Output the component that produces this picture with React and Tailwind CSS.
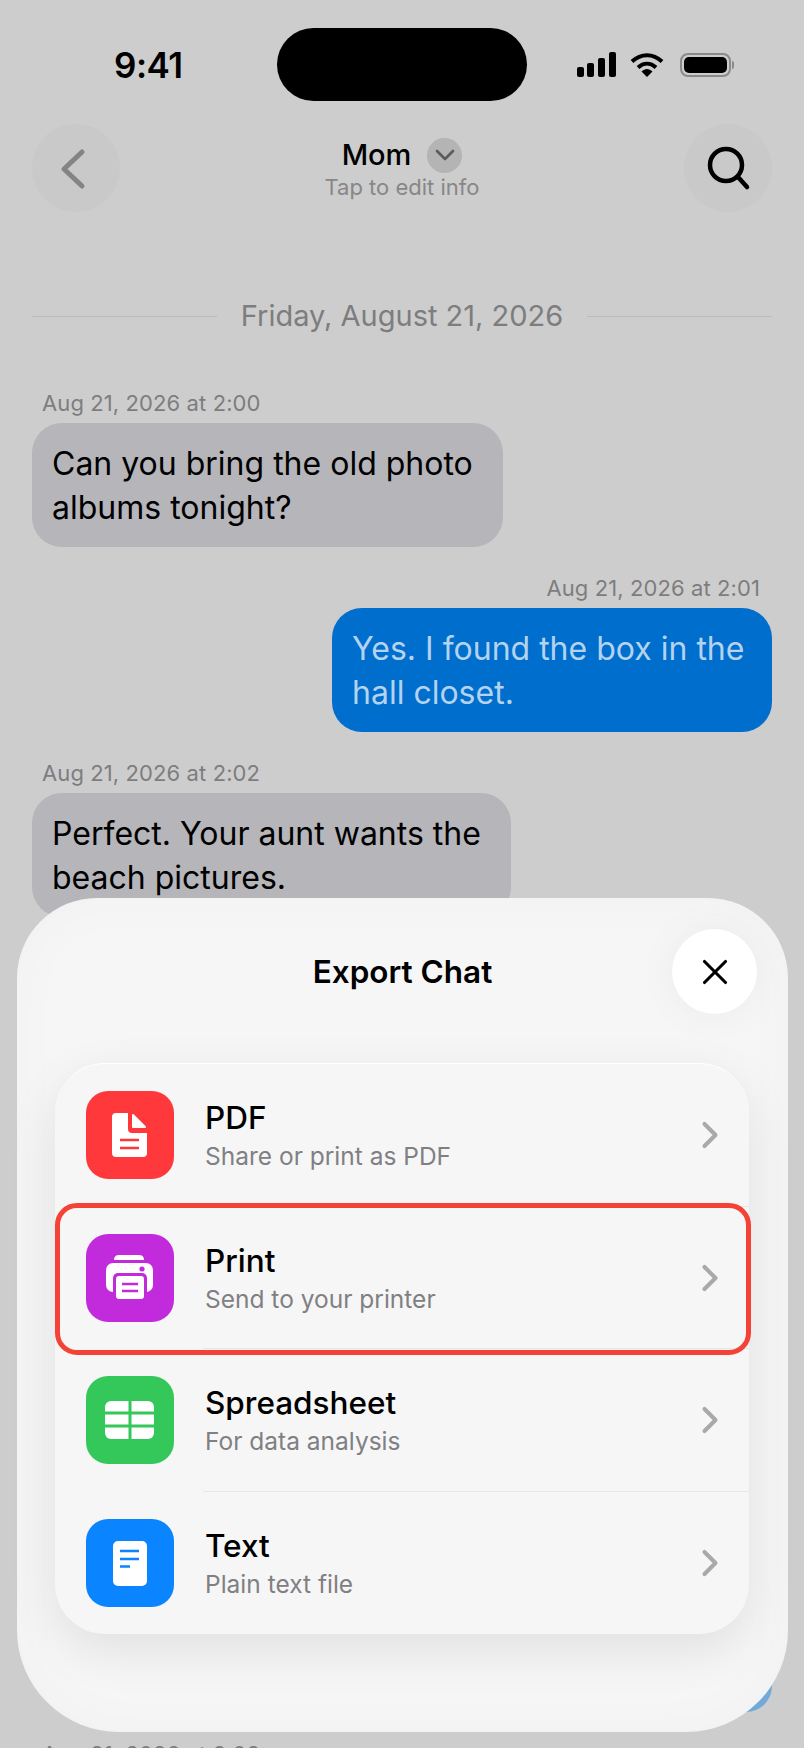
import { ChevronDown, ChevronRight, X } from "lucide-react";

const Stamp = ({ children, right }) => (
  <p className={"text-[22px] leading-[26px] tracking-[0.1px] text-[#7d7d7f] " + (right ? "text-right pr-3" : "pl-[10px]")}>
    {children}
  </p>
);

const Bubble = ({ children, mine, width }) => (
  <div
    className={
      "mt-[7px] rounded-[30px] px-[20px] pt-[19px] pb-[17px] text-[32px] leading-[44px] " +
      width + " " +
      (mine ? "ml-auto bg-[#006ecd] text-[#b3d3ef]" : "bg-[#b5b5ba] text-black")
    }
  >
    {children}
  </div>
);

const PdfIcon = () => (
  <svg viewBox="0 0 88 88" className="size-[88px]">
    <path d="M30 22H42V38Q42 42 46 42H61V62Q61 66 57 66H30Q26 66 26 62V26Q26 22 30 22Z" fill="#fff" />
    <path d="M47 24L59 36H47Z" fill="#fff" stroke="#fff" strokeWidth="2" strokeLinejoin="round" />
    <path d="M34 49H53M34 57H53" stroke="#ff383c" strokeWidth="2.4" />
  </svg>
);

const PrintIcon = () => (
  <svg viewBox="0 0 88 88" className="size-[88px]">
    <path d="M28 26Q28 21 33 21H53Q58 21 58 26Z" fill="#fff" />
    <rect x="20" y="29" width="47" height="29" rx="7" fill="#fff" />
    <rect x="27" y="39" width="34" height="29" rx="5" fill="#c22bdb" />
    <rect x="30" y="42" width="28" height="23" rx="3" fill="#fff" />
    <circle cx="56" cy="35" r="2.6" fill="#c22bdb" />
    <path d="M36 50H52M36 57H52" stroke="#c22bdb" strokeWidth="2.4" />
  </svg>
);

const SheetIcon = () => (
  <svg viewBox="0 0 88 88" className="size-[88px]">
    <rect x="19" y="25" width="49" height="38" rx="6" fill="#fff" />
    <path d="M44 24V64M18 37H69M18 50H69" stroke="#34c759" strokeWidth="3" />
  </svg>
);

const TextIcon = () => (
  <svg viewBox="0 0 88 88" className="size-[88px]">
    <rect x="27" y="22" width="34" height="45" rx="5" fill="#fff" />
    <path d="M34 32H53M34 40H53M34 47.500H44" stroke="#0a84ff" strokeWidth="2.400" />
  </svg>
);

const rows = [
  { title: "PDF", sub: "Share or print as PDF", bg: "bg-[#ff383c]", Icon: PdfIcon },
  { title: "Print", sub: "Send to your printer", bg: "bg-[#c22bdb]", Icon: PrintIcon },
  { title: "Spreadsheet", sub: "For data analysis", bg: "bg-[#34c759]", Icon: SheetIcon },
  { title: "Text", sub: "Plain text file", bg: "bg-[#0a84ff]", Icon: TextIcon },
];

const Row = ({ row, last }) => (
  <div className="relative flex h-[142.500px] items-center pl-[31px] pr-[17px]">
    <div className={"size-[88px] rounded-[22px] " + row.bg}>
      <row.Icon />
    </div>
    <div className="ml-[31px] flex-1">
      <p className="text-[31.500px] leading-[38px] font-medium text-black">{row.title}</p>
      <p className="mt-[4px] text-[24.500px] leading-[30px] text-[#808083]">{row.sub}</p>
    </div>
    <ChevronRight className="size-[44px] text-[#a9a9ab]" strokeWidth={2.2} />
    {!last && <div className="absolute right-0 bottom-0 left-[148px] h-px bg-[#e6e6e8]" />}
  </div>
);

export default function App() {
  return (
    <div className="relative h-[1748px] w-[804px] overflow-hidden bg-[#cdcdcd] font-['Inter','Liberation_Sans',sans-serif]">
      {/* status bar */}
      <div className="absolute top-[28px] right-0 left-0 flex h-[73px] items-center pl-[114px]">
        <span className="mt-[2px] w-[163px] text-[35px] font-semibold tracking-[-0.5px] text-black">9:41</span>
        <div className="h-[73px] w-[250px] rounded-[37px] bg-black" />
        <svg viewBox="0 0 60 26" className="ml-[50px] h-[26px] w-[60px]">
          <rect x="0" y="15" width="7" height="10" rx="2" />
          <rect x="10" y="11" width="7" height="14" rx="2" />
          <rect x="21" y="6" width="7" height="19" rx="2" />
          <rect x="32" y="0" width="7" height="25" rx="2" />
        </svg>
        <svg viewBox="0 0 34 24" className="-ml-[7px] h-[24px] w-[34px]">
          <path d="M2 8.500C11 0 23 0 32 8.500" fill="none" stroke="#000" strokeWidth="4" />
          <path d="M8 14.500C13.500 9.500 20.500 9.500 26 14.500" fill="none" stroke="#000" strokeWidth="4" />
          <path d="M11.500 18.500C15 15 19 15 22.500 18.500L17 24Z" />
        </svg>
        <div className="ml-[16px] flex items-center">
          <div className="flex h-[24px] w-[51px] rounded-[8px] border-2 border-[#8a8a8a] p-[2px]">
            <div className="flex-1 rounded-[5px] bg-black" />
          </div>
          <div className="ml-px h-[8px] w-[2px] rounded-r-sm bg-[#8a8a8a]" />
        </div>
      </div>

      {/* chat */}
      <div className="px-[32px] pt-[124px]">
        <div className="flex items-start justify-between">
          <div className="size-[88px] rounded-full bg-[#c9c9c9]">
            <svg viewBox="0 0 88 88" className="size-[88px]" fill="none" stroke="#848484" strokeWidth="5" strokeLinecap="round" strokeLinejoin="round">
              <path d="M50 28L32 45L50 62" />
            </svg>
          </div>
          <div className="flex flex-col items-center pt-[13px]">
            <div className="flex items-center gap-[16px]">
              <span className="text-[29px] leading-[36px] font-medium text-black">Mom</span>
              <div className="flex size-[35px] items-center justify-center rounded-full bg-[#b4b4b4]">
                <ChevronDown className="size-[32px] shrink-0 text-[#5c5c5c]" strokeWidth={2} />
              </div>
            </div>
            <span className="-mt-[1px] text-[22px] leading-[30px] text-[#878787]">Tap to edit info</span>
          </div>
          <div className="size-[88px] rounded-full bg-[#c9c9c9]">
            <svg viewBox="0 0 88 88" className="size-[88px]" fill="none" stroke="#000" strokeWidth="4.500" strokeLinecap="round">
              <circle cx="42" cy="41" r="16" />
              <path d="M54 53L63 63" />
            </svg>
          </div>
        </div>

        <div className="mt-[86px] flex items-center gap-[24px]">
          <div className="h-px flex-1 bg-[#bbbbbb]" />
          <span className="text-[29px] leading-[36px] text-[#7d7d7f]">Friday, August 21, 2026</span>
          <div className="h-px flex-1 bg-[#bbbbbb]" />
        </div>

        <div className="mt-[56px]">
          <Stamp>Aug 21, 2026 at 2:00</Stamp>
          <Bubble width="w-[471px]">Can you bring the old photo albums tonight?</Bubble>
        </div>
        <div className="mt-[28px]">
          <Stamp right>Aug 21, 2026 at 2:01</Stamp>
          <Bubble mine width="w-[440px]">Yes. I found the box in the hall closet.</Bubble>
        </div>
        <div className="mt-[28px]">
          <Stamp>Aug 21, 2026 at 2:02</Stamp>
          <Bubble width="w-[479px]">Perfect. Your aunt wants the beach pictures.</Bubble>
        </div>
        <div className="mt-[61px] ml-auto h-[734px] w-[440px] rounded-[26px] bg-[#72a9d9]" />
        <div className="mt-[29px]">
          <Stamp>Aug 21, 2026 at 2:03</Stamp>
        </div>
      </div>

      {/* export sheet */}
      <div className="absolute top-[898px] left-[17px] h-[834px] w-[771px] rounded-t-[80px] rounded-b-[102px] bg-[#f6f6f6] shadow-[inset_0_0_60px_rgba(0,0,0,0.025)]">
        <div className="relative flex h-[165px] items-start justify-center">
          <h2 className="mt-[55px] text-[31.500px] leading-[38px] font-semibold text-black">Export Chat</h2>
          <div className="absolute top-[31px] right-[31px] flex size-[85px] items-center justify-center rounded-full bg-white shadow-[0_0_40px_rgba(0,0,0,0.05)]">
            <X className="size-[42px] text-black" strokeWidth={1.8} />
          </div>
        </div>
        <div className="mx-[38px] w-[694px] rounded-[50px] border-t border-white bg-[#f6f6f7] shadow-[0_16px_50px_rgba(0,0,0,0.09)]">
          {rows.map((row, i) => (
            <Row key={row.title} row={row} last={i === rows.length - 1} />
          ))}
        </div>
      </div>

      {/* highlight */}
      <div className="absolute top-[1203px] left-[55px] h-[152px] w-[696px] rounded-[22px] border-[5px] border-[#f44336]" />
    </div>
  );
}
